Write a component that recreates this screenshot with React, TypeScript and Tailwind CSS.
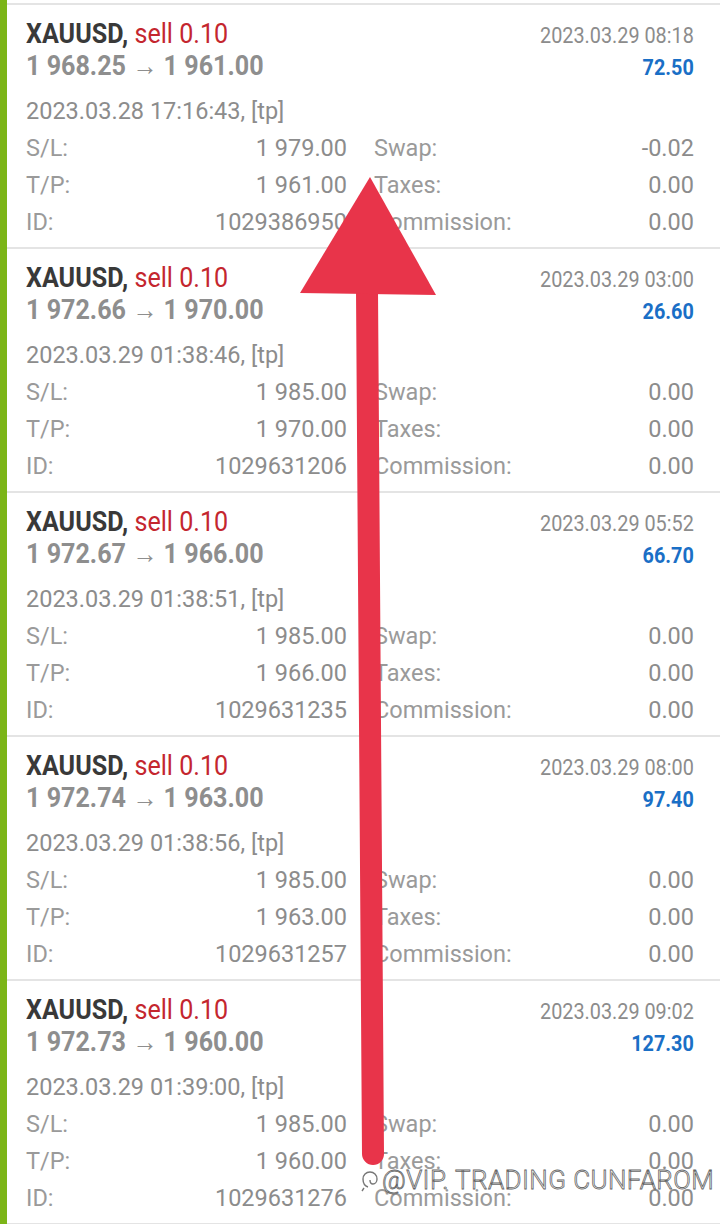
const trades = [
  { open: "1 968.25", close: "1 961.00", closed: "2023.03.29 08:18", profit: "72.50", opened: "2023.03.28 17:16:43", sl: "1 979.00", tp: "1 961.00", id: "1029386950", swap: "-0.02" },
  { open: "1 972.66", close: "1 970.00", closed: "2023.03.29 03:00", profit: "26.60", opened: "2023.03.29 01:38:46", sl: "1 985.00", tp: "1 970.00", id: "1029631206", swap: "0.00" },
  { open: "1 972.67", close: "1 966.00", closed: "2023.03.29 05:52", profit: "66.70", opened: "2023.03.29 01:38:51", sl: "1 985.00", tp: "1 966.00", id: "1029631235", swap: "0.00" },
  { open: "1 972.74", close: "1 963.00", closed: "2023.03.29 08:00", profit: "97.40", opened: "2023.03.29 01:38:56", sl: "1 985.00", tp: "1 963.00", id: "1029631257", swap: "0.00" },
  { open: "1 972.73", close: "1 960.00", closed: "2023.03.29 09:02", profit: "127.30", opened: "2023.03.29 01:39:00", sl: "1 985.00", tp: "1 960.00", id: "1029631276", swap: "0.00" },
];

type Trade = (typeof trades)[number];

function Row({ label, value }: { label: string; value: string }) {
  return (
    <div className="flex h-[37px] items-center justify-between">
      <span className="text-[#9a9a9a]">{label}</span>
      <span className="text-[#8c8c8c]">{value}</span>
    </div>
  );
}

function TradeCard({ t }: { t: Trade }) {
  return (
    <div className="h-[244px] border-t-2 border-[#e4e4e4] pl-[19px] pr-[26px]">
      <div className="flex justify-between pt-[13px]">
        <div className="origin-left scale-x-[0.93] whitespace-nowrap text-[27px] font-bold leading-[32px]">
          <div>
            <span className="text-[#393939]">XAUUSD, </span>
            <span className="font-normal text-[#c4262e]">sell 0.10</span>
          </div>
          <div className="text-[#8e8e8e]">
            {t.open} <span className="font-normal">→</span> {t.close}
          </div>
        </div>
        <div className="origin-right scale-x-[0.9] whitespace-nowrap pt-[2px] text-right text-[22px] leading-[32px]">
          <div className="text-[#8c8c8c]">{t.closed}</div>
          <div className="font-bold text-[#1a6fc6]">{t.profit}</div>
        </div>
      </div>
      <div className="mt-[9px] flex h-[37px] items-center text-[#8c8c8c]">
        {t.opened}, [tp]
      </div>
      <div className="grid grid-cols-[321px_320px] gap-x-[27px]">
        <div>
          <Row label="S/L:" value={t.sl} />
          <Row label="T/P:" value={t.tp} />
          <Row label="ID:" value={t.id} />
        </div>
        <div>
          <Row label="Swap:" value={t.swap} />
          <Row label="Taxes:" value="0.00" />
          <Row label="Commission:" value="0.00" />
        </div>
      </div>
    </div>
  );
}

export default function App() {
  return (
    <div className="relative h-[1224px] w-[720px] overflow-hidden bg-white font-['Roboto',sans-serif] text-[23.5px]">
      <div className="h-full border-l-[7px] border-[#7cb518] pt-[3px]">
        {trades.map((t) => (
          <TradeCard key={t.id} t={t} />
        ))}
        <div className="border-t-2 border-[#e4e4e4]" />
      </div>

      <svg className="pointer-events-none absolute inset-0" width="720" height="1224" viewBox="0 0 720 1224">
        <line x1="373" y1="1154" x2="367" y2="290" stroke="#e8344a" strokeWidth="22" strokeLinecap="round" />
        <polygon points="370,177 300,293 436,295" fill="#e8344a" />
      </svg>

      <div className="pointer-events-none absolute left-[360px] top-[1165px] flex items-center gap-[2px] whitespace-nowrap">
        <svg width="20" height="24" viewBox="0 0 20 24" fill="none" stroke="#777" strokeWidth="1.4">
          <path d="M10 4c-4 0-7 3-7 7s2 7 5 8M10 4c4 0 7 3 7 7 0 3-2 5-4 5-2 0-3-2-3-4" />
          <path d="M4 20l-2 3" />
        </svg>
        <span className="text-[26px] font-light leading-[30px] tracking-[0.4px] text-white [-webkit-text-stroke:0.8px_#666]">
          @VIP. TRADING CUNFAROM
        </span>
      </div>
    </div>
  );
}
